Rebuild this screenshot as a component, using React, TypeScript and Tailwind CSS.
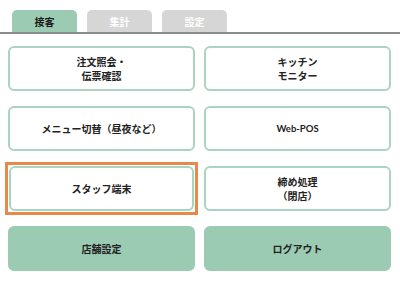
import type { ReactNode } from 'react'

const FONT = { fontFamily: '"Noto Sans CJK JP", "Noto Sans", sans-serif' }

function Tab({ label, active }: { label: string; active?: boolean }) {
  return (
    <div
      className={`flex h-[22px] w-[65px] items-center justify-center rounded-t-[5px] text-[10px] font-bold ${
        active ? 'bg-[#9ccbb4] text-[#1a1a1a]' : 'bg-[#d6d6d6] text-white'
      }`}
    >
      {label}
    </div>
  )
}

function MenuButton({ children, filled }: { children: ReactNode; filled?: boolean }) {
  return (
    <button
      className={`flex h-[45px] w-full items-center justify-center rounded-[6px] border-2 text-center text-[10px] font-bold leading-[14px] text-[#222] ${
        filled ? 'border-[#9ccbb4] bg-[#9ccbb4]' : 'border-[#acd3c1] bg-white'
      }`}
    >
      {children}
    </button>
  )
}

export default function App() {
  return (
    <div className="h-[282px] w-[400px] bg-white" style={FONT}>
      <div className="flex gap-[10px] border-b-2 border-[#8c8c8c] pl-[12px] pt-[10px]">
        <Tab label="接客" active />
        <Tab label="集計" />
        <Tab label="設定" />
      </div>
      <div className="grid grid-cols-2 gap-x-[9px] gap-y-[15px] pl-[8px] pr-[9px] pt-[12px]">
        <MenuButton>
          注文照会・
          <br />
          伝票確認
        </MenuButton>
        <MenuButton>
          キッチン
          <br />
          モニター
        </MenuButton>
        <MenuButton>メニュー切替（昼夜など）</MenuButton>
        <MenuButton>
          <span className="font-[Lato] text-[9.5px]">Web-POS</span>
        </MenuButton>
        <div className="-mx-[3px] -my-[4px] border-[3px] border-[#e8894b] p-px">
          <MenuButton>スタッフ端末</MenuButton>
        </div>
        <MenuButton>
          締め処理
          <br />
          （閉店）
        </MenuButton>
        <MenuButton filled>店舗設定</MenuButton>
        <MenuButton filled>ログアウト</MenuButton>
      </div>
    </div>
  )
}
